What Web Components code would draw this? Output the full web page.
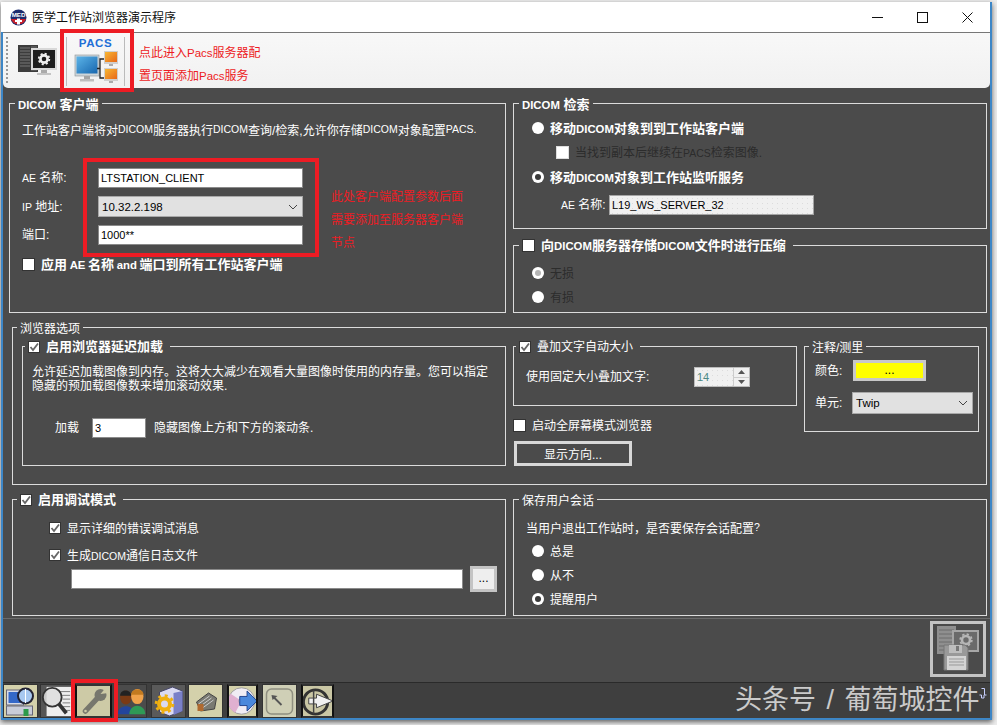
<!DOCTYPE html>
<html lang="zh">
<head>
<meta charset="utf-8">
<title>医学工作站浏览器演示程序</title>
<style>
  html, body { margin: 0; padding: 0; overflow: hidden; }
</style>
</head>
<body>
<med-window></med-window>
<script>
const FONT = '"Liberation Sans", "Noto Sans CJK SC", sans-serif';

class GroupBox extends HTMLElement {
    constructor() {
        super();
        this.attachShadow({ mode: 'open' });
        this.shadowRoot.innerHTML = `
            <style>
                :host { display: block; box-sizing: border-box; border: 1px solid #dcdcdc; }
                .legend {
                    display: flex; align-items: center; width: fit-content; height: 15px;
                    margin: -8px 0 0 var(--lx, 5px); padding: 0 var(--lr, 3px) 0 3px;
                    background: #4b4b4b; color: #fff; white-space: nowrap;
                }
            </style>
            <div class="legend"><slot name="legend"></slot></div>
            <slot></slot>
        `;
    }
}

class OptCheck extends HTMLElement {
    constructor() {
        super();
        this.attachShadow({ mode: 'open' });
    }
    connectedCallback() {
        const mark = this.hasAttribute('checked')
            ? '<svg width="10" height="10" viewBox="0 0 10 10"><path d="M1.500 5 L4 8 L9 1.500" fill="none" stroke="#666" stroke-width="1.800"/></svg>'
            : '';
        this.shadowRoot.innerHTML = `
            <style>
                :host { display: inline-flex; align-items: center; height: 15px; gap: 6px; color: #fff; white-space: nowrap; }
                :host([bold]) { font-weight: 700; font-size: 13px; }
                :host([dim]) { color: #2c2c2c; }
                .box {
                    box-sizing: border-box; width: 13px; height: 13px; flex: none; background: #fff;
                    border: 1px solid #333; display: flex; align-items: center; justify-content: center;
                }
                :host([checked]) .box { width: 12px; height: 12px; }
                :host([dim]) .box { border-color: #ddd; }
                .txt { padding-bottom: 2px; }
            </style>
            <span class="box">${mark}</span><span class="txt"><slot></slot></span>
        `;
    }
}

class OptRadio extends HTMLElement {
    constructor() {
        super();
        this.attachShadow({ mode: 'open' });
        this.shadowRoot.innerHTML = `
            <style>
                :host { display: flex; align-items: center; height: 16px; gap: 6px; color: #fff; white-space: nowrap; }
                :host([bold]) { font-weight: 700; font-size: 13px; }
                :host([dim]) { color: #2c2c2c; }
                .dot {
                    box-sizing: border-box; width: 12px; height: 12px; flex: none; border-radius: 50%;
                    background: #fff; display: flex; align-items: center; justify-content: center;
                }
                :host([on]) .dot::after { content: ""; width: 6px; height: 6px; border-radius: 50%; background: #3a3a3a; }
                :host([on][dim]) .dot::after { background: #b5b5b5; }
                .txt { padding-bottom: 2px; }
            </style>
            <span class="dot"></span><span class="txt"><slot></slot></span>
        `;
    }
}

class TextField extends HTMLElement {
    constructor() {
        super();
        this.attachShadow({ mode: 'open' });
    }
    connectedCallback() {
        this.shadowRoot.innerHTML = `
            <style>
                :host {
                    display: flex; align-items: center; box-sizing: border-box; flex: none;
                    background: #fff; border: 1px solid #8a8a8a; color: #000; padding-left: 2px;
                    font-size: 11px; white-space: nowrap; overflow: hidden;
                }
                :host([dim]) {
                    border-color: #a5a5a5;
                    background: radial-gradient(#dcdcdc 0.6px, #f0f0f0 0.8px) 0 0 / 5px 5px;
                }
            </style>
            <span>${this.getAttribute('value') || ''}</span>
        `;
    }
}

class DropList extends HTMLElement {
    constructor() {
        super();
        this.attachShadow({ mode: 'open' });
    }
    connectedCallback() {
        this.shadowRoot.innerHTML = `
            <style>
                :host {
                    display: flex; align-items: center; justify-content: space-between; box-sizing: border-box; flex: none;
                    background: #e1e1e1; border: 1px solid #a8a8a8; color: #000; padding: 0 4px 0 3px; font-size: 11.5px;
                }
            </style>
            <span>${this.getAttribute('value') || ''}</span>
            <svg width="10" height="6" viewBox="0 0 10 6"><path d="M1 1 L5 5 L9 1" fill="none" stroke="#444" stroke-width="1"/></svg>
        `;
    }
}

class SpinBox extends HTMLElement {
    constructor() {
        super();
        this.attachShadow({ mode: 'open' });
        this.shadowRoot.innerHTML = `
            <style>
                :host {
                    display: flex; box-sizing: border-box; flex: none; width: 56px; height: 20px;
                    border: 1px solid #bbb; background: radial-gradient(#dcdcdc 0.6px, #f0f0f0 0.8px) 0 0 / 5px 5px;
                    color: #4d8a86; font-size: 11px;
                }
                .val { flex: 1; display: flex; align-items: center; padding-left: 2px; }
                .arrows { width: 15px; display: grid; grid-template-rows: 1fr 1fr; gap: 1px; background: #ccc; border-left: 1px solid #ccc; }
                .arrows span { background: #f0f0f0; display: flex; align-items: center; justify-content: center; }
            </style>
            <span class="val">14</span>
            <span class="arrows">
                <span><svg width="7" height="4"><path d="M3.500 0 L7 4 L0 4Z" fill="#555"/></svg></span>
                <span><svg width="7" height="4"><path d="M0 0 L7 0 L3.500 4Z" fill="#555"/></svg></span>
            </span>
        `;
    }
}

class PlainButton extends HTMLElement {
    constructor() {
        super();
        this.attachShadow({ mode: 'open' });
        this.shadowRoot.innerHTML = `
            <style>
                :host {
                    display: flex; align-items: center; justify-content: center; box-sizing: border-box; flex: none;
                    border: 3px solid #d8d8d8; color: #fff; background: #4b4b4b; padding-bottom: 1px;
                }
                :host([kind="color"]) { background: #ff0; color: #000; border-color: #c8c8c8; padding-bottom: 2px; }
                :host([kind="more"]) { background: #eeeeee; color: #000; border-color: #c4c4c4; padding-bottom: 2px; }
            </style>
            <slot></slot>
        `;
    }
}

class TitleBar extends HTMLElement {
    constructor() {
        super();
        this.attachShadow({ mode: 'open' });
        this.shadowRoot.innerHTML = `
            <style>
                :host {
                    display: flex; align-items: center; height: 30px; background: #fff; color: #111;
                    margin: 0 0 0 -2px; padding-left: 9px; font-size: 12px;
                }
                .logo { margin-right: 5px; flex: none; }
                .name { flex: 1; padding-bottom: 2px; }
                .ctl { width: 45px; height: 30px; display: flex; align-items: center; justify-content: center; }
            </style>
            <svg class="logo" width="17" height="17" viewBox="0 0 17 17">
                <circle cx="8.500" cy="8.500" r="8" fill="#1c2c6e"/>
                <path d="M1 10 H16 A8 8 0 0 1 1 10Z" fill="#c8222c"/>
                <path d="M7 9.500 H10 V11 H12 V13 H10 V15.500 H7 V13 H5 V11 H7Z" fill="#fff"/>
                <text x="8.500" y="8.400" font-size="6.200" font-weight="700" fill="#fff" text-anchor="middle" font-family="Liberation Sans">MED</text>
            </svg>
            <span class="name">医学工作站浏览器演示程序</span>
            <span class="ctl"><svg width="11" height="11"><path d="M0 5.500 H11" stroke="#111"/></svg></span>
            <span class="ctl"><svg width="11" height="11"><rect x=".5" y=".5" width="10" height="10" fill="none" stroke="#111"/></svg></span>
            <span class="ctl"><svg width="11" height="11"><path d="M.5 .5 L10.500 10.500 M10.500 .5 L.5 10.500" stroke="#111"/></svg></span>
        `;
    }
}

class ToolStrip extends HTMLElement {
    constructor() {
        super();
        this.attachShadow({ mode: 'open' });
        this.shadowRoot.innerHTML = `
            <style>
                :host {
                    display: flex; height: 56px; box-sizing: border-box; padding: 0 0 0 3px;
                    background: linear-gradient(#f8f8f8, #f1f1f1); border-top: 1px solid #777;
                    border-radius: 0 0 5px 5px; font-size: 12px; align-items: flex-start;
                }
                .grip { width: 2px; height: 46px; margin: 4px 10px 0 0; background: repeating-linear-gradient(#999 0 2px, transparent 2px 4px); }
                .server { margin: 11px 8px 0 -1px; flex: none; }
                .pacs {
                    box-sizing: border-box; width: 59px; height: 49px; margin-top: 4px; flex: none;
                    border-left: 1px solid #bbb; border-right: 1px solid #bbb;
                    display: flex; flex-direction: column; align-items: center;
                }
                .pacs b { color: #1f6fd6; font: 700 11.500px/14px "Liberation Sans", sans-serif; letter-spacing: .6px; margin-top: -1px; }
                .pacs svg { margin-top: 1px; }
                .note { margin: 9px 0 0 14px; color: #ed1c24; line-height: 23px; white-space: nowrap; }
                i { font-style: normal; font-size: 11.500px; }
            </style>
            <span class="grip"></span>
            <svg class="server" width="41" height="32" viewBox="0 0 41 32">
                <rect x="1" y="1" width="20" height="27" fill="#3c3c3c"/>
                <path d="M3 4 H13 M3 7 H13 M3 10 H13 M3 13 H13 M3 16 H13 M3 19 H13 M3 22 H13" stroke="#777"/>
                <rect x="14" y="2" width="6" height="25" fill="#555"/>
                <rect x="14" y="4" width="26" height="22" fill="#d8d8d8"/>
                <rect x="16" y="6" width="22" height="18" fill="#1d1d1d"/>
                <rect x="24" y="26" width="6" height="3" fill="#aaa"/>
                <rect x="20" y="29" width="14" height="2" fill="#c4c4c4"/>
                <circle cx="27" cy="15" r="3.600" fill="none" stroke="#eee" stroke-width="2.600"/>
                <circle cx="27" cy="15" r="5.300" fill="none" stroke="#eee" stroke-width="1.800" stroke-dasharray="2.100 2.060"/>
            </svg>
            <div class="pacs">
                <b>PACS</b>
                <svg width="44" height="33" viewBox="0 0 44 33">
                    <defs>
                        <linearGradient id="bl" x1="0" y1="0" x2="1" y2="1"><stop offset="0" stop-color="#5cb4e8"/><stop offset="1" stop-color="#1766ae"/></linearGradient>
                        <linearGradient id="or" x1="0" y1="0" x2="1" y2="1"><stop offset="0" stop-color="#f7b733"/><stop offset="1" stop-color="#e8681a"/></linearGradient>
                    </defs>
                    <rect x="1" y="4" width="24" height="21" fill="#cfd6d9" stroke="#8a9296" stroke-width=".6"/>
                    <rect x="2.500" y="5.500" width="21" height="17" fill="url(#bl)"/>
                    <rect x="10" y="25" width="6" height="3" fill="#a5a5a5"/>
                    <rect x="6" y="28" width="14" height="2.500" fill="#bdbdbd"/>
                    <path d="M30 8 H26 V27 H30 M26 17.500 H23" fill="none" stroke="#222" stroke-width="1.300"/>
                    <rect x="30" y="0" width="14" height="13" fill="#cfcfcf"/>
                    <rect x="31" y="1" width="12" height="10" fill="url(#or)"/>
                    <rect x="35" y="13" width="4" height="2" fill="#aaa"/>
                    <rect x="30" y="17" width="14" height="13" fill="#cfcfcf"/>
                    <rect x="31" y="18" width="12" height="10" fill="url(#or)"/>
                    <rect x="35" y="30" width="4" height="2" fill="#aaa"/>
                </svg>
            </div>
            <div class="note">点此进入<i>Pacs</i>服务器配<br>置页面添加<i>Pacs</i>服务</div>
        `;
    }
}

// [background, shapes, black side frame, width, gap before]
const DOCK_ICONS = [
    ['#d4d1ab', `<rect x="3" y="6" width="17" height="15" fill="#d8dce8" stroke="#667"/><rect x="5" y="8" width="13" height="11" fill="#3468c8"/>
        <rect x="3" y="22" width="26" height="9" fill="#c8ccd8" stroke="#667"/><rect x="20" y="25" width="5" height="7" fill="#2d9a4a"/>
        <circle cx="22" cy="12" r="7.500" fill="#a8c8f0" stroke="#223" stroke-width="2"/><path d="M22 5 V19" stroke="#fff"/>`, false, 35, 0],
    ['#555', `<rect x="7" y="2" width="27" height="31" fill="#eee"/><path d="M20 7 H32 M22 11 H32 M24 15 H32 M24 19 H32 M24 23 H32 M24 27 H32" stroke="#777"/>
        <circle cx="13" cy="13" r="10" fill="#ddd" fill-opacity=".85" stroke="#333" stroke-width="2"/><path d="M20 20 L28 30" stroke="#333" stroke-width="4"/>`, false, 32, 2],
    ['#cdcaa6', `<path d="M9 27 L22 13" stroke="#77776d" stroke-width="5.500" stroke-linecap="round"/><circle cx="24" cy="11" r="6" fill="#77776d"/>
        <path d="M24 10 L29 4 L32 9Z" fill="#cdcaa6"/><circle cx="9" cy="27" r="1.300" fill="#cdcaa6"/>`, true, 37, 3],
    ['#4b4b4b', `<path d="M1 32 C1 20 19 20 19 32Z" fill="#23459c"/><ellipse cx="10" cy="13" rx="6.500" ry="8" fill="#7a3a14"/><path d="M3.500 11 C3.500 3 16 3 16 11Z" fill="#222"/>
        <path d="M14 32 C14 19 32 19 32 32Z" fill="#2f9a56"/><ellipse cx="23" cy="12" rx="7" ry="8.500" fill="#f0a24a"/><path d="M16 10 C16 2 30 2 30 10Z" fill="#c27a20"/>`, false, 30, 5],
    ['#5a5a5a', `<path d="M8 8 L21 3 L31 7 V27 L18 32 L8 28Z" fill="#dadaf2" stroke="#446"/><path d="M22 9 L31 7 V27 L22 31Z" fill="#7a80c8"/>
        <circle cx="13" cy="20" r="5.500" fill="none" stroke="#f0b010" stroke-width="4"/><circle cx="13" cy="20" r="8.500" fill="none" stroke="#f0b010" stroke-width="2.600" stroke-dasharray="3 3.670"/>`, false, 35, 4],
    ['#d4d1ab', `<path d="M8 18 L20 9 L28 14 L26 25 L12 27Z" fill="#7a7a72" stroke="#444"/><path d="M10 20 L21 12 M12 22 L23 14 M14 24 L25 16" stroke="#ccc"/><rect x="9" y="20" width="6" height="7" fill="#b06a30"/>`, false, 35, 2],
    ['#d4d1ab', `<circle cx="16" cy="17" r="14.500" fill="#f0ecf4" stroke="#999"/><path d="M16 17 L4 9 A14.500 14.500 0 0 0 9 30Z" fill="#e0b0d0"/><circle cx="16" cy="17" r="3" fill="#fff" stroke="#999"/>
        <path d="M14 12 H22 V6 L33 17 L22 28 V22 H14Z" fill="#4a88dc" stroke="#1c3c88"/>`, true, 31, 4],
    ['#cfcfb6', `<rect x="4" y="5" width="26" height="25" rx="5" fill="none" stroke="#8f8f80" stroke-width="1.500"/><path d="M19 21 L11 13" stroke="#555" stroke-width="1.800"/><path d="M9 11 L15 12 L10 16Z" fill="#555"/>`, false, 35, 4],
    ['#c9c6a4', `<circle cx="15" cy="18" r="12.500" fill="none" stroke="#333" stroke-width="3"/><path d="M8 14 H16 V10 L33 17 L16 24 V20 H8Z" fill="#f2f2f2" stroke="#444"/><path d="M13 6 V30" stroke="#444" stroke-width="1.500"/>`, true, 33, 4]
];

class DockBar extends HTMLElement {
    constructor() {
        super();
        this.attachShadow({ mode: 'open' });
        const cells = DOCK_ICONS.map(([bg, shape, framed, w, gap]) => `
            <span class="cell${framed ? ' framed' : ''}" style="background:${bg};width:${w}px;margin-left:${gap}px">
                <svg width="${w}" height="34" viewBox="0 0 34 34" preserveAspectRatio="xMidYMid meet">${shape}</svg>
            </span>`).join('');
        this.shadowRoot.innerHTML = `
            <style>
                :host {
                    display: flex; box-sizing: border-box; height: 36px; padding: 1px 0 0 0;
                    background: #3f3f3f; border-top: 1px solid #2a2a2a;
                }
                .cell { box-sizing: border-box; height: 34px; display: block; overflow: hidden; border: 1px solid #333; flex: none; }
                .framed { border: 2px solid #111; border-top-color: #333; border-bottom-color: #333; }
                .framed svg { margin: -2px; }
                svg { display: block; margin: -1px; }
            </style>
            ${cells}
        `;
    }
}

class MedWindow extends HTMLElement {
    constructor() {
        super();
        this.attachShadow({ mode: 'open' });
        this.shadowRoot.innerHTML = `
            <style>
                :host {
                    display: block; position: relative; width: 997px; height: 725px; overflow: hidden;
                    background: #ececec; font: 12px ${FONT};
                }
                .win {
                    box-sizing: border-box; width: 991px; height: 718px; margin: 2px 0 0 1px;
                    border: 2px solid #3d86c6; border-top: 0;
                    box-shadow: 0 2px 5px rgba(0, 0, 0, .6); background: #4b4b4b;
                }
                i { font-style: normal; font-size: .875em; }
                .main { height: 530px; box-sizing: border-box; padding-top: 15px; background: #4b4b4b; color: #fff; }
                .row { display: flex; }
                .r1 { padding-left: 6px; gap: 7px; }
                .stack { width: 474px; }
                .r2 { margin: 14px 0 0 9px; width: 975px; height: 158px; }
                .r3 { margin: 14px 0 0 9px; gap: 7px; }

                .line { display: flex; align-items: center; white-space: nowrap; }
                .lab { flex: none; line-height: 14px; }

                .footer {
                    box-sizing: border-box; height: 64px; display: flex; justify-content: flex-end;
                    border-top: 1px solid #6b6b6b; padding: 2px 4px 0 0;
                }
                .save { box-sizing: border-box; width: 56px; height: 56px; border: 3px solid #c4c4c4; }
                .save svg { display: block; }

                .frame { position: absolute; box-sizing: border-box; border: 4px solid #ed1c24; pointer-events: none; }
                .note { position: absolute; left: 331px; top: 186px; width: 136px; color: #ed1c24; line-height: 23px; }
                .mark { position: absolute; left: 735px; top: 685px; color: #cacaca; font-size: 27px; line-height: 30px; word-spacing: 3px; white-space: nowrap; }
                .cursor { position: absolute; left: 979px; top: 688px; }
            </style>
            <div class="win">
                <title-bar></title-bar>
                <tool-strip></tool-strip>
                <div class="main">
                    <div class="row r1">
                        <group-box style="width:497px;height:210px">
                            <span slot="legend" style="font-weight:700;font-size:13px"><i>DICOM</i> 客户端</span>
                            <div class="line" style="height:16px;margin:10px 0 0 12px">工作站客户端将对<i>DICOM</i>服务器执行<i>DICOM</i>查询/检索,允许你存储<i>DICOM</i>对象配置<i>PACS.</i></div>
                            <div class="line" style="margin:31px 0 0 12px"><span class="lab" style="width:76px"><i>AE</i> 名称:</span><text-field value="LTSTATION_CLIENT" style="width:205px;height:20px"></text-field></div>
                            <div class="line" style="margin:8px 0 0 12px"><span class="lab" style="width:76px"><i>IP</i> 地址:</span><drop-list value="10.32.2.198" style="width:205px;height:21px"></drop-list></div>
                            <div class="line" style="margin:8px 0 0 12px"><span class="lab" style="width:76px">端口:</span><text-field value="1000**" style="width:205px;height:20px"></text-field></div>
                            <div style="margin:12px 0 0 12px"><opt-check bold style="word-spacing:-1px">应用 <i>AE</i> 名称 <i>and</i> 端口到所有工作站客户端</opt-check></div>
                        </group-box>
                        <div class="stack">
                            <group-box style="height:126px">
                                <span slot="legend" style="font-weight:700;font-size:13px"><i>DICOM</i> 检索</span>
                                <opt-radio bold style="margin:9px 0 0 18px">移动<i>DICOM</i>对象到到工作站客户端</opt-radio>
                                <div style="margin:9px 0 0 42px;height:15px"><opt-check dim>当找到副本后继续在<i>PACS</i>检索图像.</opt-check></div>
                                <opt-radio bold on style="margin:9px 0 0 18px">移动<i>DICOM</i>对象到工作站监听服务</opt-radio>
                                <div class="line" style="margin:10px 0 0 47px"><span class="lab" style="width:48px"><i>AE</i> 名称:</span><text-field dim value="L19_WS_SERVER_32" style="width:205px;height:20px"></text-field></div>
                            </group-box>
                            <group-box style="height:68px;margin-top:16px;--lr:7px">
                                <opt-check slot="legend" bold>向<i>DICOM</i>服务器存储<i>DICOM</i>文件时进行压缩</opt-check>
                                <opt-radio dim on style="margin:12px 0 0 18px">无损</opt-radio>
                                <opt-radio dim style="margin:8px 0 0 18px">有损</opt-radio>
                            </group-box>
                        </div>
                    </div>
                    <group-box class="r2" style="--lx:4px">
                        <span slot="legend">浏览器选项</span>
                        <div class="row" style="margin:11px 0 0 9px;gap:7px;align-items:flex-start">
                            <group-box style="width:484px;height:120px;--lx:2px;--lr:7px">
                                <opt-check slot="legend" bold checked>启用浏览器延迟加载</opt-check>
                                <div style="margin:11px 0 0 9px;line-height:14px;white-space:nowrap">允许延迟加载图像到内存。这将大大减少在观看大量图像时使用的内存量。您可以指定<br>隐藏的预加载图像数来增加滚动效果.</div>
                                <div class="line" style="margin:25px 0 0 32px"><span class="lab" style="width:37px">加载</span><text-field value="3" style="width:54px;height:20px"></text-field><span class="lab" style="margin-left:8px">隐藏图像上方和下方的滚动条.</span></div>
                            </group-box>
                            <div style="width:284px">
                                <group-box style="height:60px;--lx:2px;--lr:7px">
                                    <opt-check slot="legend" checked>叠加文字自动大小</opt-check>
                                    <div class="line" style="margin:13px 0 0 12px"><span class="lab" style="width:168px">使用固定大小叠加文字:</span><spin-box></spin-box></div>
                                </group-box>
                                <div style="margin-top:12px;height:14px;display:flex;align-items:center"><opt-check>启动全屏幕模式浏览器</opt-check></div>
                                <plain-button style="width:118px;height:25px;margin:9px 0 0 1px">显示方向...</plain-button>
                            </div>
                            <group-box style="width:175px;height:86px">
                                <span slot="legend">注释/测里</span>
                                <div class="line" style="margin:6px 0 0 10px"><span class="lab" style="width:38px">颜色:</span><plain-button kind="color" style="width:73px;height:21px">...</plain-button></div>
                                <div class="line" style="margin:11px 0 0 10px"><span class="lab" style="width:37px">单元:</span><drop-list value="Twip" style="width:121px;height:22px"></drop-list></div>
                            </group-box>
                        </div>
                    </group-box>
                    <div class="row r3">
                        <group-box style="width:494px;height:117px;--lx:4px;--lr:7px">
                            <opt-check slot="legend" bold checked>启用调试模式</opt-check>
                            <div style="margin:14px 0 0 36px;height:14px;display:flex;align-items:center"><opt-check checked>显示详细的错误调试消息</opt-check></div>
                            <div style="margin:13px 0 0 36px;height:14px;display:flex;align-items:center"><opt-check checked>生成<i>DICOM</i>通信日志文件</opt-check></div>
                            <div class="line" style="margin:4px 0 0 58px;gap:7px"><text-field style="width:392px;height:20px"></text-field><plain-button kind="more" style="width:27px;height:26px">...</plain-button></div>
                        </group-box>
                        <group-box style="width:474px;height:117px">
                            <span slot="legend">保存用户会话</span>
                            <div class="line" style="height:16px;margin:12px 0 0 12px">当用户退出工作站时，是否要保存会话配置<i>?</i></div>
                            <opt-radio style="margin:8px 0 0 18px">总是</opt-radio>
                            <opt-radio style="margin:8px 0 0 18px">从不</opt-radio>
                            <opt-radio on style="margin:8px 0 0 18px">提醒用户</opt-radio>
                        </group-box>
                    </div>
                </div>
                <div class="footer">
                    <div class="save">
                        <svg width="50" height="50" viewBox="0 0 50 50">
                            <rect x="4" y="2" width="19" height="28" fill="#8f8f8f"/>
                            <path d="M6 6 H21 M6 10 H21 M6 14 H21 M6 18 H21 M6 22 H21 M6 26 H21" stroke="#6d6d6d"/>
                            <rect x="19" y="6" width="27" height="22" fill="#a6a6a6"/>
                            <rect x="21" y="8" width="23" height="18" fill="#6a6a6a"/>
                            <circle cx="33" cy="16" r="4" fill="none" stroke="#b5b5b5" stroke-width="2.600"/>
                            <circle cx="33" cy="16" r="5.800" fill="none" stroke="#b5b5b5" stroke-width="1.800" stroke-dasharray="2.300 2.250"/>
                            <path d="M11 21 H32 L35 24 V46 H11Z" fill="#999" stroke="#777"/>
                            <rect x="16" y="21" width="13" height="8" fill="#bdbdbd"/>
                            <rect x="23" y="22" width="3" height="5" fill="#777"/>
                            <rect x="14" y="32" width="19" height="14" fill="#d4d4d4"/>
                            <path d="M16 35 H31 M16 38 H31 M16 41 H31" stroke="#999"/>
                        </svg>
                    </div>
                </div>
                <dock-bar></dock-bar>
            </div>

            <div class="frame" style="left:60px;top:29px;width:74px;height:63px"></div>
            <div class="frame" style="left:83px;top:158px;width:236px;height:99px"></div>
            <div class="frame" style="left:71px;top:679px;width:47px;height:43px"></div>
            <div class="note">此处客户端配置参数后面需要添加至服务器客户端节点</div>
            <div class="mark">头条号 / 葡萄城控件</div>
            <svg class="cursor" width="8" height="11"><path d="M2.500 .5 H5.500 V7 H7.500 M.5 7 H2.500 V10 H5 V7" fill="none" stroke="#c8d0ff"/></svg>
        `;
    }
}

customElements.define('group-box', GroupBox);
customElements.define('opt-check', OptCheck);
customElements.define('opt-radio', OptRadio);
customElements.define('text-field', TextField);
customElements.define('drop-list', DropList);
customElements.define('spin-box', SpinBox);
customElements.define('plain-button', PlainButton);
customElements.define('title-bar', TitleBar);
customElements.define('tool-strip', ToolStrip);
customElements.define('dock-bar', DockBar);
customElements.define('med-window', MedWindow);
</script>
</body>
</html>
